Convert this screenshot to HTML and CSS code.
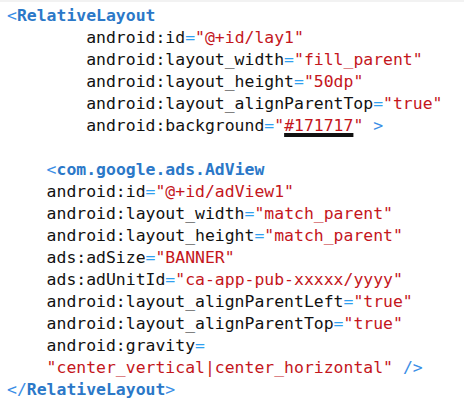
FILE: index.html
```html
<!DOCTYPE html>
<html>
<head>
<meta charset="utf-8">
<link rel="stylesheet" href="styles.css">
</head>
<body>
<div class="topline"></div>
<pre class="code"><span class="p">&lt;</span><span class="t">RelativeLayout</span>
        <span class="a">android:id</span><span class="e">=</span><span class="v">"@+id/lay1"</span>
        <span class="a">android:layout_width</span><span class="e">=</span><span class="v">"fill_parent"</span>
        <span class="a">android:layout_height</span><span class="e">=</span><span class="v">"50dp"</span>
        <span class="a">android:layout_alignParentTop</span><span class="e">=</span><span class="v">"true"</span>
        <span class="a">android:background</span><span class="e">=</span><span class="v">"<span class="swatch">#171717</span>"</span> <span class="p">&gt;</span>

    <span class="p">&lt;</span><span class="t">com.google.ads.AdView</span>
    <span class="a">android:id</span><span class="e">=</span><span class="v">"@+id/adView1"</span>
    <span class="a">android:layout_width</span><span class="e">=</span><span class="v">"match_parent"</span>
    <span class="a">android:layout_height</span><span class="e">=</span><span class="v">"match_parent"</span>
    <span class="a">ads:adSize</span><span class="e">=</span><span class="v">"BANNER"</span>
    <span class="a">ads:adUnitId</span><span class="e">=</span><span class="v">"ca-app-pub-xxxxx/yyyy"</span>
    <span class="a">android:layout_alignParentLeft</span><span class="e">=</span><span class="v">"true"</span>
    <span class="a">android:layout_alignParentTop</span><span class="e">=</span><span class="v">"true"</span>
    <span class="a">android:gravity</span><span class="e">=</span>
    <span class="v">"center_vertical|center_horizontal"</span> <span class="p">/&gt;</span>
<span class="p">&lt;/</span><span class="t">RelativeLayout</span><span class="p">&gt;</span></pre>
</body>
</html>
```
FILE: styles.css
```css
html, body {
  margin: 0;
  padding: 0;
  background: #ffffff;
}
.topline {
  height: 2px;
  background: #f2f2f2;
}
.code {
  margin: 0;
  padding: 3px 0 0 7px;
  font-family: "DejaVu Sans Mono", "Liberation Mono", monospace;
  font-size: 16.45px;
  line-height: 22px;
  color: #111111;
}
.p { color: #3a8ee6; }
.t { color: #2b78c8; font-weight: bold; }
.a { color: #111111; }
.e { color: #2fa0f0; }
.v { color: #c4161c; }
.swatch {
  text-decoration: underline;
  text-decoration-color: #111111;
  text-decoration-thickness: 4px;
  text-underline-offset: 2px;
}
```
